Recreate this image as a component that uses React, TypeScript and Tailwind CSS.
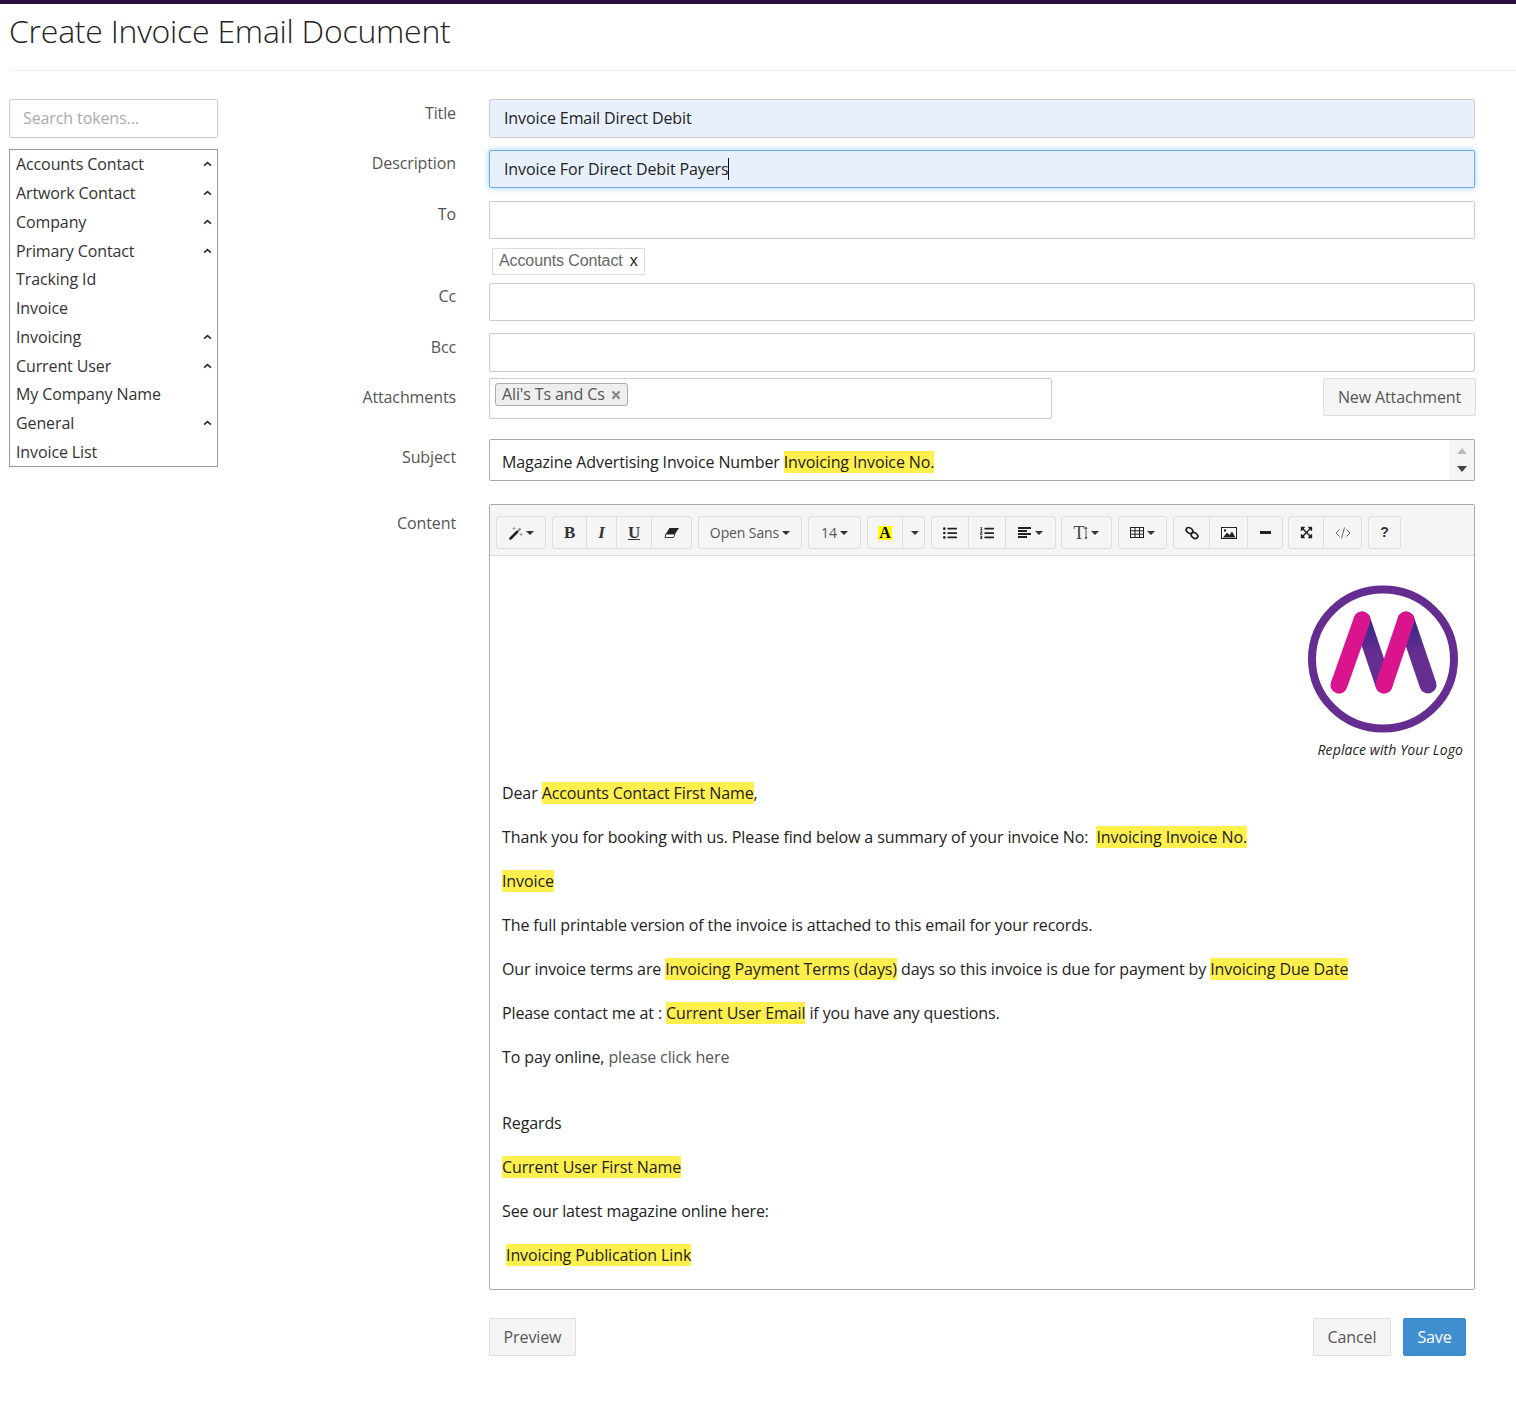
import type { ReactNode } from "react";
import { FaListUl, FaListOl, FaExpandArrowsAlt, FaTimes } from "react-icons/fa";

const tokens = [
  { name: "Accounts Contact", open: true },
  { name: "Artwork Contact", open: true },
  { name: "Company", open: true },
  { name: "Primary Contact", open: true },
  { name: "Tracking Id", open: false },
  { name: "Invoice", open: false },
  { name: "Invoicing", open: true },
  { name: "Current User", open: true },
  { name: "My Company Name", open: false },
  { name: "General", open: true },
  { name: "Invoice List", open: false },
];

const Caret = () => (
  <span className="ml-[3px] inline-block h-0 w-0 border-x-[4px] border-t-[4px] border-x-transparent border-t-[#333]" />
);

const Mark = ({ children }: { children: ReactNode }) => (
  <span className="bg-[#fff04d]">{children}</span>
);

const Row = ({
  label,
  labelClass,
  className,
  children,
}: {
  label?: string;
  labelClass?: string;
  className?: string;
  children: ReactNode;
}) => (
  <div className={`flex ${className ?? ""}`}>
    <div className={`w-[238px] shrink-0 text-right leading-[22px] text-[#555] ${labelClass ?? "pt-[2px]"}`}>{label}</div>
    <div className="ml-[33px] w-[986px] shrink-0">{children}</div>
  </div>
);

const TextInput = ({ className }: { className?: string }) => (
  <div className={`rounded-[2px] border border-[#ccc] bg-white ${className ?? "h-[38px]"}`} />
);

const ToolBtn = ({ className, children }: { className: string; children: ReactNode }) => (
  <div className={`-ml-px flex h-[33px] items-center justify-center border border-[#ddd] bg-[#f5f5f5] text-[#333] first:ml-0 first:rounded-l-[3px] last:rounded-r-[3px] ${className}`}>
    {children}
  </div>
);

// summernote's icon font isn't available, these are redrawn by hand
const WandIcon = () => (
  <svg viewBox="0 0 14 14" className="h-[14px] w-[14px]">
    <path d="M1.5 12.5 L8 6" stroke="#222" strokeWidth="2.6" strokeLinecap="round" />
    <path d="M9 5 L11.5 2.5" stroke="#888" strokeWidth="2.4" />
    <path d="M5 1 V4 M3.5 2.5 H6.5 M12 7 V10 M10.5 8.5 H13.5" stroke="#999" strokeWidth="1" />
  </svg>
);

const EraserIcon = () => (
  <svg viewBox="0 0 16 12" className="h-[12px] w-[16px]">
    <path d="M5.5 1 H15 L11 7 H1.8 Z" fill="#222" />
    <path d="M1.8 7 H11 L9.5 10.5 H1 Z" fill="#fff" stroke="#222" strokeWidth="0.9" />
  </svg>
);

const ListLinesIcon = () => (
  <svg viewBox="0 0 14 11" className="h-[11px] w-[14px]" fill="#222">
    <rect x="0" y="0" width="13" height="2" />
    <rect x="0" y="3" width="9" height="2" />
    <rect x="0" y="6" width="13" height="2" />
    <rect x="0" y="9" width="9" height="2" />
  </svg>
);

const HeightArrow = () => (
  <svg viewBox="0 0 4 14" className="h-[14px] w-[4px]">
    <path d="M2 1 V13" stroke="#555" strokeWidth="1" />
    <path d="M0.5 3 L2 0.5 L3.5 3 Z M0.5 11 L2 13.5 L3.5 11 Z" fill="#555" />
  </svg>
);

const TableIcon = () => (
  <svg viewBox="0 0 14 11" className="h-[11px] w-[14px]" fill="none" stroke="#222" strokeWidth="1">
    <rect x="0.5" y="0.5" width="13" height="10" />
    <path d="M0.5 3.8 H13.5 M0.5 7.2 H13.5 M5 0.5 V10.5 M9.5 0.5 V10.5" />
  </svg>
);

const LinkIcon = () => (
  <svg viewBox="0 0 14 14" className="h-[14px] w-[14px]" fill="none" stroke="#222" strokeWidth="1.7">
    <ellipse cx="4.5" cy="4.5" rx="3.6" ry="2.6" transform="rotate(35 4.5 4.5)" />
    <ellipse cx="9.5" cy="9.5" rx="3.6" ry="2.6" transform="rotate(35 9.5 9.5)" />
  </svg>
);

const PictureIcon = () => (
  <svg viewBox="0 0 16 12" className="h-[12px] w-[16px]">
    <rect x="0.5" y="0.5" width="15" height="11" fill="#fff" stroke="#222" strokeWidth="1" />
    <path d="M2 10.5 L6 5.5 L8.5 8 L11 4.5 L14.5 10.5 Z" fill="#222" />
    <circle cx="4" cy="3.5" r="1.2" fill="#222" />
  </svg>
);

const CodeIcon = () => (
  <svg viewBox="0 0 16 12" className="h-[12px] w-[16px]" fill="none" stroke="#666" strokeWidth="1">
    <path d="M4.5 2.5 L1 6 L4.5 9.5 M11.5 2.5 L15 6 L11.5 9.5 M9.5 0.5 L6.5 11.5" />
  </svg>
);

const Toolbar = () => (
  <div className="flex h-[51px] items-start gap-[6px] border-b border-[#ddd] bg-[#f5f5f5] pl-[6px] pt-[11px]">
    <div className="flex">
      <ToolBtn className="w-[50px]"><WandIcon /><Caret /></ToolBtn>
    </div>
    <div className="flex">
      <ToolBtn className="w-[35px] font-['Liberation_Serif',serif] text-[17px] font-bold">B</ToolBtn>
      <ToolBtn className="w-[31px] font-['Liberation_Serif',serif] text-[17px] font-bold italic">I</ToolBtn>
      <ToolBtn className="w-[36px] font-['Liberation_Serif',serif] text-[17px] font-bold underline">U</ToolBtn>
      <ToolBtn className="w-[41px]"><EraserIcon /></ToolBtn>
    </div>
    <div className="flex">
      <ToolBtn className="w-[104px] text-[14px] text-[#555]">Open Sans<Caret /></ToolBtn>
    </div>
    <div className="flex">
      <ToolBtn className="w-[53px] text-[14px] text-[#555]">14<Caret /></ToolBtn>
    </div>
    <div className="flex">
      <ToolBtn className="w-[36px]">
        <span className="bg-[#ffff00] px-px font-['Liberation_Serif',serif] text-[16px] leading-[14px] font-bold text-black">A</span>
      </ToolBtn>
      <ToolBtn className="w-[23px]"><Caret /></ToolBtn>
    </div>
    <div className="flex">
      <ToolBtn className="w-[38px]"><FaListUl className="text-[14px] text-[#222]" /></ToolBtn>
      <ToolBtn className="w-[38px]"><FaListOl className="text-[14px] text-[#222]" /></ToolBtn>
      <ToolBtn className="w-[51px]"><ListLinesIcon /><Caret /></ToolBtn>
    </div>
    <div className="-ml-px flex">
      <ToolBtn className="w-[51px]">
        <span className="font-['Liberation_Serif',serif] text-[18px] leading-none text-[#444]">T</span>
        <HeightArrow />
        <Caret />
      </ToolBtn>
    </div>
    <div className="flex">
      <ToolBtn className="w-[49px]"><TableIcon /><Caret /></ToolBtn>
    </div>
    <div className="flex">
      <ToolBtn className="w-[37px]"><LinkIcon /></ToolBtn>
      <ToolBtn className="w-[39px]"><PictureIcon /></ToolBtn>
      <ToolBtn className="w-[36px]"><span className="h-[3px] w-[11px] bg-[#222]" /></ToolBtn>
    </div>
    <div className="-ml-px flex">
      <ToolBtn className="w-[36px]"><FaExpandArrowsAlt className="text-[13px] text-[#222]" /></ToolBtn>
      <ToolBtn className="w-[39px]"><CodeIcon /></ToolBtn>
    </div>
    <div className="flex">
      <ToolBtn className="w-[33px] font-['Liberation_Sans',sans-serif] text-[14px] font-bold">?</ToolBtn>
    </div>
  </div>
);

const Logo = () => (
  <svg viewBox="0 0 156 156" className="h-[156px] w-[156px]">
    <defs>
      <linearGradient id="shade" x1="0" y1="0" x2="0" y2="1">
        <stop offset="0" stopColor="#2f2a86" />
        <stop offset="0.5" stopColor="#662d91" />
      </linearGradient>
    </defs>
    <ellipse cx="78" cy="79" rx="71" ry="69.5" fill="none" stroke="#662d91" strokeWidth="8" />
    <path d="M57 40 L79 105" stroke="url(#shade)" strokeWidth="17" strokeLinecap="round" fill="none" />
    <path d="M101 40 L123 105" stroke="url(#shade)" strokeWidth="17" strokeLinecap="round" fill="none" />
    <path d="M57 40 L34 105" stroke="#d9148c" strokeWidth="17" strokeLinecap="round" fill="none" />
    <path d="M101 40 L79 105" stroke="#d9148c" strokeWidth="17" strokeLinecap="round" fill="none" />
  </svg>
);

const Editor = () => (
  <div className="h-[786px] rounded-[2px] border border-[#aaa] bg-white">
    <Toolbar />
    <div className="px-3 text-[16px] leading-[24px] text-[#222]">
      <div className="flex flex-col items-end pt-[24px]">
        <div className="mr-[1px]"><Logo /></div>
        <div className="mt-[2px] -mr-px text-[14px] leading-[24px] tracking-[0.1px] italic">Replace with Your Logo</div>
      </div>
      <p className="mt-[19px] mb-5">Dear <Mark>Accounts Contact First Name</Mark>,</p>
      <p className="mb-5">Thank you for booking with us. Please find below a summary of your invoice No:&nbsp; <Mark>Invoicing Invoice No.</Mark></p>
      <p className="mb-5"><Mark>Invoice</Mark></p>
      <p className="mb-5">The full printable version of the invoice is attached to this email for your records.</p>
      <p className="mb-5">Our invoice terms are <Mark>Invoicing Payment Terms (days)</Mark> days so this invoice is due for payment by <Mark>Invoicing Due Date</Mark></p>
      <p className="mb-5">Please contact me at : <Mark>Current User Email</Mark> if you have any questions.</p>
      <p className="mb-[42px]">To pay online, <span className="text-[#555]">please click here</span></p>
      <p className="mb-5">Regards</p>
      <p className="mb-5"><Mark>Current User First Name</Mark></p>
      <p className="mb-5">See our latest magazine online here:</p>
      <p>&nbsp;<Mark>Invoicing Publication Link</Mark></p>
    </div>
  </div>
);

const Button = ({ className, children }: { className: string; children: ReactNode }) => (
  <button className={`h-[38px] rounded-[2px] border text-[16px] ${className}`}>
    {children}
  </button>
);

export default function App() {
  return (
    <div className="min-h-[1410px] border-t-4 border-[#2a0f3f] bg-white font-['Open_Sans',sans-serif] text-[16px] tracking-[-0.11px] text-[#333]">
      <div className="ml-[9px] h-[67px] border-b border-[#eee]">
        <h1 className="pt-[5px] text-[32px] leading-[44px] font-light tracking-[-0.25px] text-[#222]">Create Invoice Email Document</h1>
      </div>
      <div className="mt-[28px] flex pl-[9px]">
        <aside className="w-[209px] shrink-0">
          <div className="flex h-[39px] items-center rounded-[2px] border border-[#ccc] px-[13px] pb-[2px] text-[#aaa]">
            Search tokens...
          </div>
          <ul className="mt-[11px] h-[318px] border border-[#999] text-[#333]">
            {tokens.map((t) => (
              <li key={t.name} className="flex h-[28.75px] items-center justify-between pl-[6px] pr-[5px]">
                {t.name}
                {t.open && (
                  <svg viewBox="0 0 10 7" className="h-[6px] w-[9px]">
                    <path d="M1 5.5 L5 1.8 L9 5.5" fill="none" stroke="#333" strokeWidth="2" />
                  </svg>
                )}
              </li>
            ))}
          </ul>
        </aside>

        <main>
          <Row label="Title" labelClass="pt-[3px]">
            <div className="flex h-[39px] items-center rounded-[2px] border border-[#ccc] bg-[#e8f0fe] px-[14px] pb-[2px] text-[#222]">
              Invoice Email Direct Debit
            </div>
          </Row>
          <Row label="Description" className="mt-[12px]">
            <div className="flex h-[38px] items-center rounded-[2px] border border-[#66afe9] bg-[#e8f0fe] px-[14px] text-[#222] shadow-[0_0_6px_rgba(102,175,233,0.6)]">
              Invoice For Direct Debit Payers
              <span className="-ml-px h-[22px] w-px bg-[#111]" />
            </div>
          </Row>
          <Row label="To" className="mt-[13px]">
            <TextInput />
          </Row>
          <Row className="mt-[9px]">
            <div className="ml-[3px] flex h-[27px] w-[153px] items-center border border-[#ddd] pb-[2px] pl-[6px] font-['Liberation_Sans',sans-serif] text-[#666]">
              Accounts Contact
              <span className="ml-[7px] text-[#222]">x</span>
            </div>
          </Row>
          <Row label="Cc" className="mt-[8px]">
            <TextInput />
          </Row>
          <Row label="Bcc" labelClass="pt-[3px]" className="mt-[12px]">
            <TextInput className="h-[39px]" />
          </Row>
          <Row label="Attachments" labelClass="pt-[8px]" className="mt-[6px]">
            <div className="flex items-start justify-between">
              <div className="h-[41px] w-[563px] rounded-[2px] border border-[#ccc] pl-[5px] pt-[4px]">
                <div className="inline-flex h-[23px] items-center gap-[5px] rounded-[3px] border border-[#aaa] bg-[#eee] pb-px pl-[6px] pr-[5px] align-top text-[#555]">
                  Ali's Ts and Cs
                  <FaTimes className="mt-px text-[12px] text-[#888]" />
                </div>
              </div>
              <Button className="-mr-px w-[153px] border-[#ddd] bg-[#f5f5f5] text-[#555]">New Attachment</Button>
            </div>
          </Row>
          <Row label="Subject" labelClass="pt-[7px]" className="mt-[20px]">
            <div className="flex h-[42px] rounded-[2px] border border-[#aaa] bg-white">
              <div className="flex-1 pl-3 pt-[10px] leading-[24px] text-[#222]">
                Magazine Advertising Invoice Number <Mark>Invoicing Invoice No.</Mark>
              </div>
              <div className="flex w-[25px] flex-col items-center justify-center gap-[12px] bg-[#f5f5f5]">
                <span className="h-0 w-0 border-x-[5px] border-b-[6px] border-x-transparent border-b-[#bbb]" />
                <span className="h-0 w-0 border-x-[5px] border-t-[6px] border-x-transparent border-t-[#444]" />
              </div>
            </div>
          </Row>
          <Row label="Content" labelClass="pt-[8px]" className="mt-[23px]">
            <Editor />
          </Row>
          <Row className="mt-[28px]">
            <div className="flex justify-between pr-[9px]">
              <Button className="w-[87px] border-[#ddd] bg-[#f5f5f5] text-[#555]">Preview</Button>
              <div className="flex gap-3">
                <Button className="w-[78px] border-[#ddd] bg-[#f5f5f5] text-[#555]">Cancel</Button>
                <Button className="w-[63px] border-[#3a87c8] bg-[#3f8ecf] text-white">Save</Button>
              </div>
            </div>
          </Row>
        </main>
      </div>
    </div>
  );
}
